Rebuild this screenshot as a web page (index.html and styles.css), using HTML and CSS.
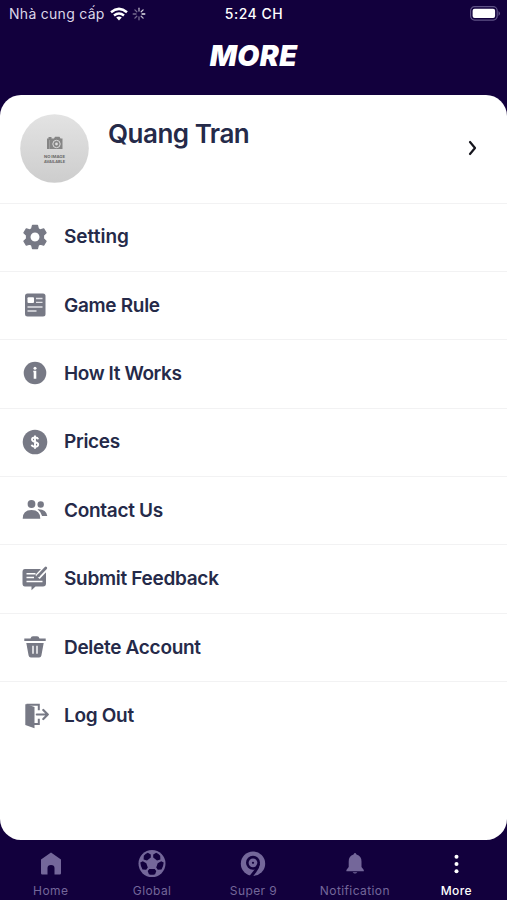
FILE: index.html
```html
<!DOCTYPE html>
<html lang="vi">
<head>
<meta charset="utf-8">
<title>More</title>
<link rel="stylesheet" href="styles.css">
</head>
<body>
<div class="app">
  <header class="status">
    <div class="carrier"><span class="carrier-name">Nhà cung cấp</span>
      <svg class="wifi" width="18" height="14" viewBox="0 0 18 14" fill="none" stroke="#fff" stroke-width="2.5"><path d="M1 5.2Q9-1.5 17 5.2M4 8.5Q9 4.5 14 8.5"/><path d="M9 13.4L6.2 10.6Q9 8.4 11.8 10.6Z" fill="#fff" stroke="none"/></svg>
      <svg class="spinner" width="14" height="14" viewBox="0 0 14 14" stroke="#fff" stroke-width="1.3" stroke-linecap="round"><path d="M7 1.2V4" opacity=".65"/><path d="M11.1 2.9L9.2 4.8" opacity=".8"/><path d="M12.8 7H10" opacity=".9"/><path d="M11.1 11.1L9.2 9.2" opacity=".7"/><path d="M7 12.8V10M2.9 11.1l1.900-1.900M1.200 7H4M2.900 2.900l1.900 1.900" opacity=".42"/></svg>
    </div>
    <div class="clock">5:24 CH</div>
    <svg class="battery" width="31" height="15" viewBox="0 0 31 15"><rect x=".6" y=".7" width="26.6" height="13.4" rx="4" fill="none" stroke="#5f5286" stroke-width="1.2"/><rect x="2.6" y="2.700" width="22.500" height="9.400" rx="2" fill="#fff"/><path d="M28.500 5v5q3-2.500 0-5" fill="#5f5286"/></svg>
  </header>
  <h1 class="title">MORE</h1>
  <main class="card">
    <section class="profile">
      <svg class="avatar" width="69" height="69" viewBox="0 0 69 69"><defs><linearGradient id="g" x2="0" y2="1"><stop stop-color="#e3e3e3"/><stop offset="1" stop-color="#cdcdcd"/></linearGradient></defs><circle cx="34.500" cy="34.500" r="34.300" fill="url(#g)"/><path fill="#858585" d="M27 24.500h1.500v-1.500h3v1.500h2.500l1-1.800h4.500l1 1.800h2V35H27z"/><circle cx="36.500" cy="30" r="3.700" fill="#858585" stroke="#ddd"/><circle cx="36.500" cy="30" r="1.400" fill="#ddd"/><path d="M29.500 26v9" stroke="#aaa" stroke-width=".7"/><text class="avatar-text" x="34.500" y="43.500" textLength="21" lengthAdjust="spacingAndGlyphs">NO IMAGE</text><text class="avatar-text" x="34.500" y="48.500" textLength="21" lengthAdjust="spacingAndGlyphs">AVAILABLE</text></svg>
      <h2 class="name">Quang Tran</h2>
      <svg class="chevron" width="10" height="16" viewBox="0 0 10 16" fill="none" stroke="#15151d" stroke-width="2.200" stroke-linecap="round" stroke-linejoin="round"><path d="M2 2l5 6-5 6"/></svg>
    </section>
    <nav>
      <a class="row"><svg class="icon" viewBox="0 0 28 28"><path stroke="#777985" stroke-width="1.200" stroke-linejoin="round" fill-rule="evenodd" d="M11.500 2.300h5l.8 3.400 2.100 1.200 3.300-1 2.400 4-2.600 2.500v3.200l2.600 2.500-2.400 4-3.300-1-2.100 1.200-.8 3.400h-5l-.8-3.400-2.100-1.200-3.300 1-2.400-4 2.600-2.500v-3.200L2.900 9.900l2.400-4 3.300 1 2.100-1.200zM14 8.900a5.100 5.100 0 1 0 0 10.200a5.100 5.100 0 1 0 0-10.200"/></svg><span class="wide">Setting</span></a>
      <a class="row"><svg class="icon" viewBox="0 0 28 28"><rect x="4" y="2.500" width="20.500" height="23" rx="2.500"/><rect x="6.500" y="6.300" width="6.500" height="5.700" rx="1" fill="#fff"/><path d="M15 7.500h6.500M15 11.400h6.500M6.500 16h15M6.500 20h9" stroke="#e3e3e8" stroke-width="1.400"/></svg><span>Game Rule</span></a>
      <a class="row"><svg class="icon" viewBox="0 0 28 28"><circle cx="14" cy="14" r="11.300"/><circle cx="14" cy="9.200" r="1.500" fill="#fff"/><path d="M12.300 11.700h3v8.100h-2.600v-6.500h-.4z" fill="#fff"/></svg><span class="tight">How It Works</span></a>
      <a class="row"><svg class="icon" viewBox="0 0 28 28"><circle cx="14" cy="14" r="12.300"/><path d="M17.200 11.300C16.400 8.800 11 8.900 11 11.500c0 3.200 6.200 1.800 6.200 5 0 2.900-5.700 3-6.600.2M14 7.500v13.200" fill="none" stroke="#fff" stroke-width="1.900"/></svg><span>Prices</span></a>
      <a class="row"><svg class="icon" viewBox="0 0 28 28"><circle cx="10.500" cy="8" r="3.900"/><circle cx="19.700" cy="8.500" r="3.200"/><path d="M1.700 22.700q0-8.700 8.800-8.700t8.800 8.700zM16.500 13.200q8.800-.5 9.800 6.800h-5.200q-1.300-4.500-4.600-6.800"/></svg><span>Contact Us</span></a>
      <a class="row"><svg class="icon" viewBox="0 0 28 28"><path d="M4 4h18q3 0 3 3v11.500q0 3-3 3h-7.500l-4 3.700v-3.700H4q-2.500 0-2.500-3V7q0-3 2.500-3"/><path d="M5.500 8.700h9M5.500 12.500h7.500M5.500 16.500h16" stroke="#fff" stroke-width="1.500"/><path d="M25 3L16.500 12" stroke="#fff" stroke-width="6"/><path d="M24.800 3L17.800 10.200" stroke="#777985" stroke-width="2.700" stroke-linecap="round"/><path d="M16 9.300l3 2.500-4 1.300z"/></svg><span>Submit Feedback</span></a>
      <a class="row"><svg class="icon" viewBox="0 0 28 28"><path d="M3.300 5.500h6.200q.5-2.200 2.500-2.200h4q2 0 2.500 2.200h6.200V8H3.300zM5.300 10h17.400l-2.300 12.500q-.4 2-2.300 2H9.900q-1.900 0-2.300-2z"/><path d="M12 12.800v8M16 12.800v8" stroke="#fff" stroke-width="1.400"/></svg><span>Delete Account</span></a>
      <a class="row"><svg class="icon" viewBox="0 0 28 28"><path d="M4.300 3.200h1.500L13.500 6v21.300L4.300 24z"/><path d="M5.500 3.700h12.300v5.500M17.800 17.800v5.200H13" fill="none" stroke="#777985" stroke-width="2"/><path d="M15.800 13.500h11M22.300 9l4.500 4.500-4.500 4.500" fill="none" stroke="#777985" stroke-width="2.200" stroke-linecap="round" stroke-linejoin="round"/></svg><span>Log Out</span></a>
    </nav>
  </main>
  <footer class="tabs">
    <a class="tab"><svg class="tab-icon" viewBox="0 0 28 28"><path d="M14 2.500L4 9.500v13.700q0 1.200 1.200 1.200h5.300V18q0-3 3.500-3t3.500 3v6.400h5.300q1.200 0 1.200-1.200V9.500z"/></svg><span>Home</span></a>
    <a class="tab"><svg class="tab-icon" viewBox="0 0 28 28"><circle cx="14" cy="13.600" r="13.500"/><g class="patch"><path d="M5.800 5.700q1.500-2 4-2.900l3 1.700v3L9 10.600l-3.400-1zM22.200 5.700q-1.500-2-4-2.900l-3 1.700v3l3.800 3.100 3.400-1zM2.300 12.500l2.500-1.200 3.500 1.900 1.500 4.400-1.600 2.200-3.700-.4q-1.900-2.800-2.200-6.900M25.700 12.500l-2.500-1.200-3.500 1.900-1.500 4.400 1.600 2.200 3.700-.4q1.900-2.800 2.200-6.900M11.300 19h5.400l1.600 2-1.200 3.300q-3.100 1-6.200 0L9.700 21z"/></g></svg><span>Global</span></a>
    <a class="tab"><svg class="tab-icon" viewBox="0 0 28 28"><circle cx="14" cy="13.700" r="12.200"/><g fill="none" stroke="#12003d"><circle cx="14" cy="12.800" r="5.700" stroke-width="2.600"/><path d="M19.500 13.800q-.5 4.200-3.200 7.200L12 26.500" stroke-width="2.900"/></g><circle class="patch" cx="14" cy="12.800" r="1.100"/></svg><span>Super 9</span></a>
    <a class="tab"><svg class="tab-icon" viewBox="0 0 28 28"><path d="M12.500 4.500q1.500-2.800 3 0 5 1.300 5 7V17l2.300 3v1.300H5.400V20l2.300-3v-5.500q0-5.700 4.800-7M11.600 22.200h4.800q-2.400 2.400-4.800 0"/></svg><span>Notification</span></a>
    <a class="tab active"><svg class="tab-icon" viewBox="0 0 28 28"><circle cx="14.500" cy="6.700" r="2"/><circle cx="14.500" cy="14" r="2"/><circle cx="14.500" cy="21.300" r="2"/></svg><span>More</span></a>
  </footer>
</div>
</body>
</html>
```
FILE: styles.css
```css
* { box-sizing: border-box; }
body { margin: 0; background: #12003d; font-family: Inter, "Liberation Sans", sans-serif; }
.app { width: 507px; height: 900px; overflow: hidden; display: flex; flex-direction: column; }
.status { height: 29px; display: grid; grid-template-columns: 1fr auto 1fr; align-items: center; padding: 0 6px 2px 9px; color: #fff; font-size: 14px; }
.carrier { display: flex; align-items: center; color: #dcd7e8; letter-spacing: .28px; }
.carrier-name { white-space: nowrap; }
.wifi { margin-left: 5px; }
.spinner { margin-left: 4px; }
.clock { font-weight: 500; letter-spacing: .5px; margin-left: -2px; }
.battery { justify-self: end; }
.title { height: 66px; margin: 0; padding-top: 8px; color: #fff; text-align: center; font-size: 28.5px; line-height: 38px; font-weight: 900; font-style: italic; letter-spacing: .4px; }
.card { height: 745px; background: #fff; border-radius: 21px; flex: none; }
.profile { height: 107.5px; display: flex; align-items: flex-start; padding: 19px 29px 0 20px; }
.avatar { flex: none; }
.avatar-text { font-size: 4px; font-weight: 700; text-anchor: middle; fill: #666; }
.name { margin: 4px auto 0 19px; font-size: 26px; line-height: 32px; font-weight: 600; letter-spacing: -.5px; color: #252a49; }
.chevron { margin-top: 26px; }
.row { height: 68.4px; border-top: 1px solid #f2f2f3; display: flex; align-items: center; gap: 15px; padding: 0 0 1px 21px; color: #252a49; font-size: 19px; font-weight: 600; letter-spacing: -.3px; }
.wide { letter-spacing: 0; }
.tight { letter-spacing: -.4px; }
.icon { width: 28px; height: 28px; fill: #777985; }
.tabs { height: 60px; display: grid; grid-template-columns: repeat(5, 1fr); padding-top: 10px; }
.tab { display: flex; flex-direction: column; align-items: center; color: #74679a; font-size: 12px; line-height: 16px; letter-spacing: .4px; gap: 5px; }
.tab-icon { width: 28px; height: 28px; fill: #74679a; flex: none; }
.patch { fill: #12003d; }
.active { color: #fff; font-weight: 500; }
.active .tab-icon { fill: #fff; }
```
